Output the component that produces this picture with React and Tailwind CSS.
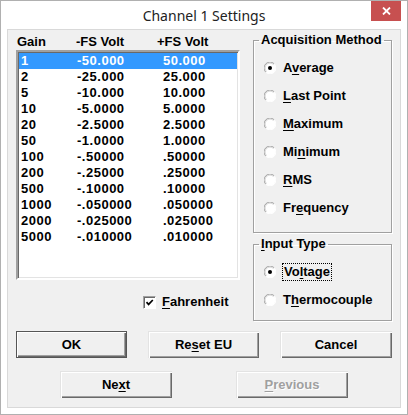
import React from 'react';

const rows = [
  ['1', '-50.000', '50.000'],
  ['2', '-25.000', '25.000'],
  ['5', '-10.000', '10.000'],
  ['10', '-5.0000', '5.0000'],
  ['20', '-2.5000', '2.5000'],
  ['50', '-1.0000', '1.0000'],
  ['100', '-.50000', '.50000'],
  ['200', '-.25000', '.25000'],
  ['500', '-.10000', '.10000'],
  ['1000', '-.050000', '.050000'],
  ['2000', '-.025000', '.025000'],
  ['5000', '-.010000', '.010000'],
];

// label with one underlined mnemonic letter
const Mn = ({ pre, u, post }) => (
  <span>
    {pre}
    <span className="underline decoration-1 underline-offset-[2px]">{u}</span>
    {post}
  </span>
);

const Radio = ({ checked }) => (
  <svg width="12" height="12" viewBox="0 0 12 12" className="shrink-0">
    <circle cx="6" cy="6" r="5.5" fill="#ffffff" />
    <path d="M1.8 10.2 A5.5 5.5 0 0 1 10.2 1.8" fill="none" stroke="#a0a0a0" strokeWidth="1" />
    <path d="M10.2 1.8 A5.5 5.5 0 0 1 1.8 10.2" fill="none" stroke="#ffffff" strokeWidth="1" />
    <path d="M2.5 9.5 A4.5 4.5 0 0 1 9.5 2.5" fill="none" stroke="#d4d4d4" strokeWidth="1" />
    {checked && <circle cx="6" cy="6" r="2" fill="#000000" />}
  </svg>
);

const RadioRow = ({ checked, children, focus }) => (
  <div className="flex items-center h-[16px]">
    <Radio checked={checked} />
    <div className={focus ? 'ml-[6px] px-[1px] border border-dotted border-black leading-[16px]' : 'ml-[7px]'}>
      {children}
    </div>
  </div>
);

const Group = ({ title, className, children }) => (
  <fieldset className={`min-w-0 border border-[#a0a0a0] shadow-[inset_1px_1px_0_#ffffff,1px_1px_0_#ffffff] box-border ${className}`}>
    <legend className="ml-[5px] px-[2px] leading-[16px] whitespace-nowrap">{title}</legend>
    <div className="flex flex-col gap-[12px] pt-[12px] pl-[10px]">{children}</div>
  </fieldset>
);

const Btn = ({ children, def, disabled, className = '' }) => (
  <div
    className={`h-[27px] flex items-center justify-center bg-[#f0f0f0] box-border ${
      def
        ? 'border border-[#555555] shadow-[inset_1px_1px_0_#ffffff,inset_-1px_-1px_0_#696969,inset_-2px_-2px_0_#a0a0a0]'
        : 'shadow-[inset_1px_1px_0_#e3e3e3,inset_2px_2px_0_#ffffff,inset_-1px_-1px_0_#696969,inset_-2px_-2px_0_#a0a0a0]'
    } ${disabled ? 'text-[#a0a0a0] [text-shadow:1px_1px_0_#ffffff]' : ''} ${className}`}
  >
    {children}
  </div>
);

export default function App() {
  return (
    <div className="w-[408px] h-[415px] box-border border border-[#b0b0b0] bg-white flex flex-col">
      <div className="h-[28px] relative flex items-center justify-center">
        <span className="text-[14px] text-[#222222] font-['Noto_Sans',sans-serif] mt-[1px]">Channel 1 Settings</span>
        <div className="absolute right-[6px] top-0 w-[30px] h-[20px] bg-[#c75050] flex items-center justify-center">
          <svg width="9" height="8" viewBox="0 0 9 8">
            <path d="M1 0.5 L8 7.5 M8 0.5 L1 7.5" stroke="#ffffff" strokeWidth="1.8" />
          </svg>
        </div>
      </div>

      <div className="mx-[6px] h-[379px] box-border border border-[#d9d9d9] bg-[#f0f0f0] text-black font-['Liberation_Sans',Arial,sans-serif] font-bold text-[13px] leading-[16px]">
        <div className="flex items-start pt-[2px] ml-[8px]">
          <div className="w-[224px] mt-[2px]">
            <div className="flex h-[16px] pl-[1px]">
              <div className="w-[59px]">Gain</div>
              <div className="w-[81px]">-FS Volt</div>
              <div>+FS Volt</div>
            </div>
            <div className="h-[230px] box-border bg-white border-2 border-t-[#a0a0a0] border-l-[#a0a0a0] border-r-[#ffffff] border-b-[#ffffff] shadow-[inset_1px_1px_0_#696969,inset_-1px_-1px_0_#e3e3e3] pt-[1px] px-[1px]">
              {rows.map((r, i) => (
                <div
                  key={r[0]}
                  className={`flex h-[16px] items-center pl-[2px] tracking-[0.5px] ${i === 0 ? 'bg-[#3399ff] text-white' : ''}`}
                >
                  <div className="w-[56px]">{r[0]}</div>
                  <div className="w-[86px]">{r[1]}</div>
                  <div>{r[2]}</div>
                </div>
              ))}
            </div>
            <div className="flex items-center h-[16px] mt-[14px] pl-[127px]">
              <div className="w-[13px] h-[13px] box-border bg-white border border-t-[#a0a0a0] border-l-[#a0a0a0] border-r-[#ffffff] border-b-[#ffffff] shadow-[inset_1px_1px_0_#696969] flex items-center justify-center">
                <svg width="9" height="9" viewBox="0 0 9 9">
                  <path d="M1.5 4.2 L3.6 6.4 L7.8 2" fill="none" stroke="#000000" strokeWidth="1.7" />
                </svg>
              </div>
              <div className="ml-[6px]">
                <Mn pre="" u="F" post="ahrenheit" />
              </div>
            </div>
          </div>

          <div className="ml-[13px] w-[139px]">
            <Group title="Acquisition Method" className="h-[201px]">
              <RadioRow checked>
                <Mn pre="A" u="v" post="erage" />
              </RadioRow>
              <RadioRow>
                <Mn pre="" u="L" post="ast Point" />
              </RadioRow>
              <RadioRow>
                <Mn pre="" u="M" post="aximum" />
              </RadioRow>
              <RadioRow>
                <Mn pre="Mi" u="n" post="imum" />
              </RadioRow>
              <RadioRow>
                <Mn pre="" u="R" post="MS" />
              </RadioRow>
              <RadioRow>
                <Mn pre="Fr" u="e" post="quency" />
              </RadioRow>
            </Group>
            <Group title={<Mn pre="" u="I" post="nput Type" />} className="h-[85px] mt-[3px]">
              <RadioRow checked focus>
                <Mn pre="Vo" u="l" post="tage" />
              </RadioRow>
              <RadioRow>
                <Mn pre="T" u="h" post="ermocouple" />
              </RadioRow>
            </Group>
          </div>
        </div>

        <div className="flex ml-[8px] mt-[10px]">
          <Btn def className="w-[111px]">OK</Btn>
          <Btn className="w-[111px] ml-[21px]">
            <Mn pre="Re" u="s" post="et EU" />
          </Btn>
          <Btn className="w-[112px] ml-[21px]">Cancel</Btn>
        </div>
        <div className="flex ml-[52px] mt-[13px]">
          <Btn className="w-[112px]">
            <Mn pre="Ne" u="x" post="t" />
          </Btn>
          <Btn disabled className="w-[112px] ml-[64px]">
            <Mn pre="" u="P" post="revious" />
          </Btn>
        </div>
      </div>
    </div>
  );
}
